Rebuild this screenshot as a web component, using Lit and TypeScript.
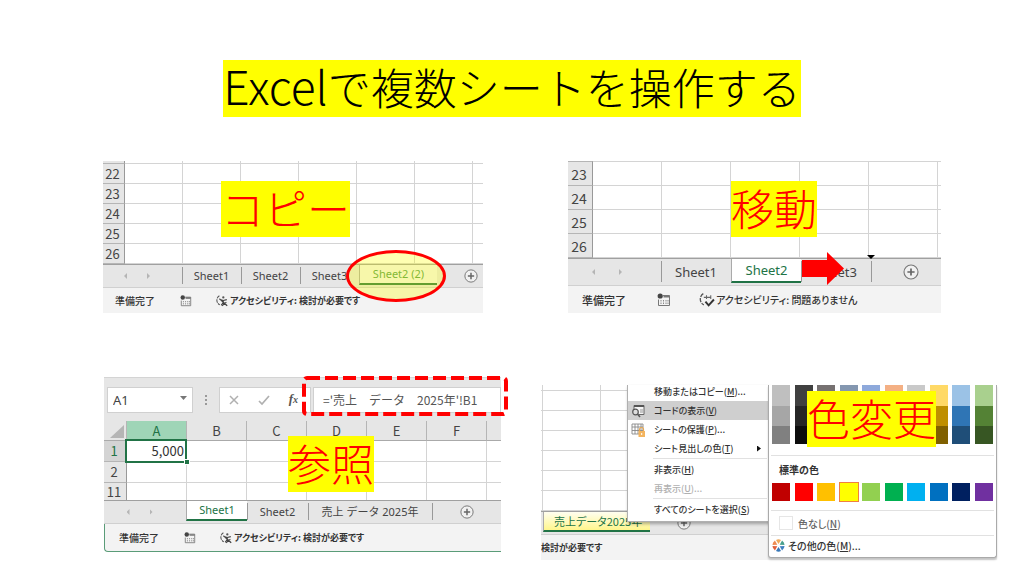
import { LitElement, html, css, svg, nothing } from "lit";
import { customElement } from "lit/decorators.js";
import { classMap } from "lit/directives/class-map.js";

type Tab = { name: string; active?: boolean };

const THEME_COLORS = [
  ["#bfbfbf", "#404040", "#767171", "#8497b0", "#8ea9db", "#f4b084", "#c9c9c9", "#ffd966", "#9bc2e6", "#a9d08e"],
  ["#a6a6a6", "#262626", "#3a3838", "#333f4f", "#305496", "#c65911", "#7b7b7b", "#bf8f00", "#2f75b5", "#548235"],
  ["#808080", "#0d0d0d", "#161616", "#222b35", "#203764", "#833c0c", "#525252", "#806000", "#1f4e78", "#375623"],
];
const STANDARD_COLORS = [
  "#c00000", "#ff0000", "#ffc000", "#ffff00", "#92d050",
  "#00b050", "#00b0f0", "#0070c0", "#002060", "#7030a0",
];

const plusIcon = svg`<svg class="plus" viewBox="0 0 16 16" aria-hidden="true">
  <circle cx="8" cy="8" r="7" fill="#f1f1f1" stroke="#777" stroke-width="1.1"/>
  <path d="M8 4.4v7.2M4.4 8h7.2" stroke="#666" stroke-width="1.7"/></svg>`;

const macroIcon = svg`<svg class="macro" viewBox="0 0 14 14" aria-hidden="true">
  <path d="M6 2.5h6.5v10h-11V6.500" fill="none" stroke="#777"/>
  <path d="M6.500 3.500h6" stroke="#777" stroke-width="2"/>
  <circle cx="3.200" cy="3" r="2.600" fill="#444"/>
  <path d="M4 7v4.500M6.500 7v4.500M9 7v4.500M11 7v4.500" stroke="#888" stroke-dasharray="1.500 1"/></svg>`;

const accessIcon = (ok: boolean) => svg`<svg class="access" viewBox="0 0 16 14" aria-hidden="true">
  <path d="M5 1.500A6 6 0 0 0 5.500 12" fill="none" stroke="#555" stroke-width="1.200" stroke-dasharray="4 1"/>
  ${ok
    ? svg`<path d="M5.500 5h6M8 3v3.500M12 3v3.500" fill="none" stroke="#666"/><path d="M7 9l3 3.500L15 7" fill="none" stroke="#333" stroke-width="1.800"/>`
    : svg`<circle cx="9.500" cy="3.500" r="1.300" fill="#555"/><path d="M6 6l3.500 1 4-1M9.500 7v2l4 4M9.500 9l-2.500 3.500M5 5l9 8M13 9l-5 4" fill="none" stroke="#444" stroke-width="1.200"/>`}
  </svg>`;

@customElement("app-root")
export class AppRoot extends LitElement {
  static styles = css`
    :host {
      display: block;
      min-height: 100vh;
      background: #fff;
      color: #444;
      font-family: "Noto Sans", "Noto Sans CJK JP", sans-serif;
      font-size: 11px;
    }
    * { box-sizing: border-box; }
    button, input {
      font: inherit;
      color: inherit;
      border: 0;
      padding: 0;
      margin: 0;
      background: none;
      border-radius: 0;
    }
    svg { display: block; flex: none; }
    header { padding-top: 60px; text-align: center; }
    h1, h2 {
      margin: 0;
      font: 300 43px/53px "Noto Sans CJK JP", sans-serif;
      white-space: nowrap;
    }
    h1 { display: inline-block; padding-bottom: 4px; color: #000; background: #ff0; vertical-align: top; }
    h1 span { font-size: 46px; line-height: 1; }
    h2 { position: absolute; color: #f00; background: #ff0; line-height: 52px; padding-bottom: 4px; }
    .row { display: grid; align-items: start; }
    .row.upper { grid-template-columns: 103fr 380fr 85fr 373fr 83fr; padding-top: 44px; }
    .row.lower { grid-template-columns: 104fr 397fr 40fr 456fr 27fr; padding-top: 64px; }
    .shot { position: relative; min-width: 0; --col: 58px; --line: 20px; --head: 22px; --bar: 24px; --foot: 25px; --tab: 59px; }
    .shot:nth-child(1) { grid-column: 2; }
    .shot:nth-child(2) { grid-column: 4; }
    .move { --col: 69px; --line: 24px; --head: 25px; --bar: 28px; --foot: 27px; --tab: 70px; font-size: 13px; }
    .refer { --col: 60px; --line: 21px; --head: 23px; --foot: 28px; --tab: 61px; }
    .color { margin-top: 8px; --head: 2px; }
    .copy h2 { left: 118px; top: 20px; }
    .move h2 { left: 163px; top: 20px; }
    .refer h2 { left: 184px; top: 59px; }
    .color h2 { left: 266px; top: 6px; z-index: 3; }

    table { width: 100%; table-layout: fixed; border-collapse: separate; border-spacing: 0; }
    th, td { height: var(--line); padding: 0; line-height: 18px; border: solid #d4d4d4; border-width: 0 1px 1px 0; font-weight: 400; overflow: hidden; white-space: nowrap; }
    td:last-child, thead th:last-child { border-right: 0; }
    th { background: #e6e6e6; font-size: 13px; font-family: "Noto Sans CJK JP", sans-serif; }
    tbody th { border-right: 1px solid #999; border-bottom-color: #b5b5b5; padding-right: 2px; }
    .color tbody th { background: #fff; border-color: #d4d4d4; }
    .hcol { width: var(--head); }
    .ccol { width: var(--col); }
    .lead th, .lead td { height: 3px; line-height: 0; }
    .move .lead th, .move .lead td { height: 1px; }
    .color .lead th, .color .lead td { height: 6px; }
    .move th { font-size: 14px; }

    .tabs { display: flex; align-items: stretch; height: var(--bar); background: #e6e6e6; border-top: 1px solid #a0a0a0; border-bottom: 1px solid #d0d0d0; overflow: hidden; }
    .nav { display: flex; justify-content: center; align-items: center; gap: 20px; width: calc(var(--head) + var(--col) - 1px); flex: none; padding-right: 11px; }
    .move .nav { gap: 24px; padding-right: 15px; }
    .nav button { width: 3px; height: 6px; background: #b5b5b5; clip-path: polygon(100% 0, 0 50%, 100% 100%); }
    .nav button + button { clip-path: polygon(0 0, 100% 50%, 0 100%); }
    .tab { width: var(--tab); flex: none; position: relative; line-height: 18px; padding-bottom: 1px; white-space: nowrap; }
    .tab::before { content: ""; position: absolute; left: 0; top: 2px; bottom: 3px; border-left: 1px solid #999; }
    .tab.active { background: #fff; color: #217346; height: calc(var(--bar) - 4px); border-bottom: 2px solid #217346; border-left: 1px solid #aaa; padding: 0; }
    .tab.active::before { display: none; }
    .tab.wide { width: 124px; }
    .tail { border-left: 1px solid #999; margin: 2px 0 3px; display: flex; align-items: center; padding-left: 27px; }
    .move .tail { padding-left: 31px; }
    .plus { width: 14px; height: 14px; }
    .move .plus { width: 16px; height: 16px; }
    .copy .tab.active { width: 78px; background: #f4f4f4; color: #4e9a4e; }
    .copy .tail { border: 0; }
    .color .tab.active { width: 107px; margin-left: 2px; background: linear-gradient(#fffef0, #fff68c); text-align: left; padding-left: 10px; font: 400 11px/18px "Noto Sans CJK JP", sans-serif; font-feature-settings: "palt"; }
    .color .tail { border: 0; }
    .color .nav { display: none; }

    .status { display: flex; align-items: center; height: var(--foot); padding-left: 12px; background: #f3f3f3; color: #333; font: 500 10px/16px "Noto Sans CJK JP", sans-serif; white-space: nowrap; overflow: hidden; }
    .status .proof { font-feature-settings: "palt"; font-size: 9px; }
    .macro { width: 12px; height: 12px; margin-left: 25px; }
    .access { width: 14px; height: 13px; margin: 0 1px 0 23px; }
    .move .status { font-size: 11px; padding-left: 14px; }
    .move .proof { font-size: 10px; }
    .move .macro { width: 14px; height: 14px; margin-left: 31px; }
    .move .access { width: 17px; height: 15px; margin-left: 27px; }
    .refer .status { padding-left: 14px; border-bottom: 1px solid #5a9c78; border-left: 1px solid #5a9c78; border-bottom-left-radius: 4px; }
    .color .status { padding-left: 0; }
    .bold { font-weight: 700; }

    .oval { position: absolute; left: 243px; top: 89px; width: 100px; height: 52px; border: 3px solid #f00; border-radius: 50%; background: rgba(255, 255, 0, 0.3); }
    .arrow { position: absolute; left: 234px; top: 91px; width: 42px; height: 33px; }
    .drop { position: absolute; left: 299px; top: 94px; width: 8px; height: 4px; background: #000; clip-path: polygon(0 0, 100% 0, 50% 100%); }
    .dashes { position: absolute; left: 197px; top: -2px; width: 209px; height: 42px; }

    .formula { display: flex; align-items: center; height: 44px; padding: 0 0 0 3px; background: #e6e6e6; border-top: 1px solid #d4d4d4; }
    .box { display: flex; align-items: center; height: 26px; background: #fff; border: 1px solid #d0d0d0; }
    .name { width: 86px; padding: 0 5px; justify-content: space-between; }
    .name input { width: 50px; font-size: 13px; }
    .caret { width: 7px; height: 4px; background: #777; clip-path: polygon(0 0, 100% 0, 50% 100%); margin-bottom: 3px; }
    .dots { width: 2px; height: 10px; margin: 0 12px; background: repeating-linear-gradient(#999 0 2px, transparent 2px 4px); }
    .tools { width: 92px; justify-content: space-between; padding: 0 12px 0 8px; margin-right: 2px; }
    .tools svg { width: 12px; height: 12px; }
    .fx { font: italic 700 13px/16px "Liberation Serif", serif; color: #555; }
    .fx small { font-size: 10px; }
    .entry { flex: 1; min-width: 0; padding-left: 9px; }
    .entry input { width: 100%; font: 400 12px/18px "Noto Sans CJK JP", sans-serif; color: #555; }
    thead th { height: 20px; border-bottom-color: #aaa; border-right-color: #b5b5b5; }
    .corner::after { content: ""; display: block; width: 14px; height: 13px; margin: 2px 0 0 6px; background: #b5b5b5; clip-path: polygon(100% 0, 100% 100%, 0 100%); }
    thead th.sel { background: #9fd5b7; color: #217346; }
    tbody th.sel { background: #d4d4d4; color: #217346; }
    td.sel { position: relative; overflow: visible; padding-right: 2px; text-align: right; font: 13px/18px "Noto Sans CJK JP", sans-serif; color: #333; }
    td.sel::before { content: ""; position: absolute; inset: -2px -1px -2px -2px; border: 2px solid #217346; }
    td.sel::after { content: ""; position: absolute; right: -3px; bottom: -3px; width: 4px; height: 4px; background: #217346; outline: 1px solid #fff; }
    .short th, .short td { height: 17px; line-height: 16px; border-bottom: 0; }

    .menu { position: absolute; left: 86px; top: 0; width: 143px; height: 137px; background: #fff; border: 1px solid #b0b0b0; border-top: 0; box-shadow: 1px 2px 3px rgba(0, 0, 0, 0.3); overflow: hidden; z-index: 1; }
    .menu, .palette { font: 500 9px/19px "Noto Sans CJK JP", sans-serif; color: #333; white-space: nowrap; }
    .palette { font-size: 10px; }
    .item { display: flex; align-items: center; width: 100%; height: 19px; padding: 0 8px 0 3px; text-align: left; font-feature-settings: "palt"; }
    .item:first-child { margin-top: -3px; }
    .item .ico { width: 14px; height: 14px; margin-right: 9px; flex: none; }
    .item .text { flex: 1; }
    .item.hot { background: #cfcfcf; }
    .item:disabled { color: #b0b0b0; }
    .item .more { width: 4px; height: 6px; background: #111; clip-path: polygon(0 0, 100% 50%, 0 100%); }
    hr { border: 0; border-top: 1px solid #e1e1e1; margin: 0 2px 1px 25px; }
    .palette { position: absolute; left: 227px; right: 0; top: 0; height: 173px; background: #fff; border: 1px solid #aaa; border-top: 0; border-radius: 0 0 3px 3px; box-shadow: 0 2px 2px rgba(0, 0, 0, 0.2); z-index: 2; }
    .swatches { display: flex; justify-content: space-between; padding: 0 3px; }
    .swatch { width: 18px; height: 18px; }
    .swatches.tall .swatch { height: 21px; }
    .swatches.mid .swatch { height: 20px; }
    .swatch.picked { outline: 1px solid #f08040; }
    .palette hr { margin: 0 2px; }
    .gap { padding-top: 11px; }
    .caption { padding: 4px 0 4px 10px; }
    .standard { padding-bottom: 9px; }
    .palette .item { height: 24px; padding-left: 10px; color: #666; }
    .palette .item.other { height: 19px; padding-left: 3px; color: #333; }
    .none { width: 14px; height: 14px; border: 1px solid #e6e6e6; margin-right: 5px; }
    .wheel { width: 13px; height: 13px; margin-right: 3px; }
  `;

  private sheet(rows: string[], columns: number) {
    const cells = Array.from({ length: columns + 1 });
    return html`<table aria-label="シート">
      <colgroup><col class="hcol" />${Array.from({ length: columns }, () => html`<col class="ccol" />`)}<col /></colgroup>
      <tbody>
        <tr class="lead"><th></th>${cells.map(() => html`<td></td>`)}</tr>
        ${rows.map((r) => html`<tr><th scope="row">${r}</th>${cells.map(() => html`<td></td>`)}</tr>`)}
      </tbody>
    </table>`;
  }

  private tabs(list: Tab[]) {
    return html`<div class="tabs">
      <div class="nav"><button aria-label="前のシート"></button><button aria-label="次のシート"></button></div>
      ${list.map((t) => html`<button class=${classMap({ tab: true, active: !!t.active, wide: t.name.length > 9 && !t.active })}>${t.name}</button>`)}
      <button class="tail" aria-label="新しいシート">${plusIcon}</button>
    </div>`;
  }

  private status(message: string, ok = false) {
    return html`<div class="status">
      <span>準備完了</span>${macroIcon}${accessIcon(ok)}
      <span class="proof ${ok ? "" : "bold"}">アクセシビリティ: ${message}</span>
    </div>`;
  }

  private copyShot() {
    return html`<section class="shot copy">
      ${this.sheet(["22", "23", "24", "25", "26"], 6)}
      ${this.tabs([{ name: "Sheet1" }, { name: "Sheet2" }, { name: "Sheet3" }, { name: "Sheet2 (2)", active: true }])}
      ${this.status("検討が必要です")}
      <div class="oval"></div>
      <h2>コピー</h2>
    </section>`;
  }

  private moveShot() {
    return html`<section class="shot move">
      ${this.sheet(["23", "24", "25", "26"], 5)}
      ${this.tabs([{ name: "Sheet1" }, { name: "Sheet2", active: true }, { name: "Sheet3" }])}
      ${this.status("問題ありません", true)}
      <div class="drop"></div>
      <svg class="arrow" viewBox="0 0 42 33" aria-hidden="true"><path d="M0 8h25V0l17 16.500L25 33v-8H0z" fill="#f00"/></svg>
      <h2>移動</h2>
    </section>`;
  }

  private referShot() {
    const letters = ["A", "B", "C", "D", "E", "F", ""];
    return html`<section class="shot refer">
      <div class="formula">
        <div class="box name"><input aria-label="名前ボックス" value="A1" /><button class="caret" aria-label="一覧"></button></div>
        <div class="dots"></div>
        <div class="box tools">
          <button aria-label="キャンセル"><svg viewBox="0 0 12 12"><path d="M2 2l8 8M10 2l-8 8" stroke="#b0b0b0" stroke-width="1.500"/></svg></button>
          <button aria-label="入力"><svg viewBox="0 0 12 12"><path d="M1 7l3 3 7-8" fill="none" stroke="#b0b0b0" stroke-width="1.700"/></svg></button>
          <button class="fx" aria-label="関数の挿入">f<small>x</small></button>
        </div>
        <div class="box entry"><input aria-label="数式" value="='売上　データ　2025年'!B1" /></div>
      </div>
      <table aria-label="シート">
        <colgroup><col class="hcol" />${letters.slice(0, 6).map(() => html`<col class="ccol" />`)}<col /></colgroup>
        <thead><tr><th class="corner"></th>${letters.map((l) => html`<th scope="col" class=${l === "A" ? "sel" : ""}>${l}</th>`)}</tr></thead>
        <tbody>
          ${["1", "2", "11"].map((r) => html`<tr class=${r === "11" ? "short" : ""}>
            <th scope="row" class=${r === "1" ? "sel" : ""}>${r}</th>
            ${letters.map((l) => (r === "1" && l === "A" ? html`<td class="sel">5,000</td>` : html`<td></td>`))}
          </tr>`)}
        </tbody>
      </table>
      ${this.tabs([{ name: "Sheet1", active: true }, { name: "Sheet2" }, { name: "売上  データ  2025年" }])}
      ${this.status("検討が必要です")}
      <svg class="dashes" viewBox="0 0 209 42" aria-hidden="true">
        <rect x="3" y="3" width="202" height="36" rx="3" fill="none" stroke="#f00" stroke-width="4" stroke-dasharray="13 5"/>
      </svg>
      <h2>参照</h2>
    </section>`;
  }

  private item(label: string, key: string, dots = "", opts: { icon?: unknown; cls?: string; disabled?: boolean; more?: boolean } = {}) {
    return html`<button class="item ${opts.cls ?? ""}" ?disabled=${!!opts.disabled}>
      <span class="ico">${opts.icon ?? nothing}</span>
      <span class="text">${label}(<u>${key}</u>)${dots}</span>
      ${opts.more ? html`<span class="more"></span>` : nothing}
    </button>`;
  }

  private swatches(colors: string[], cls: string) {
    return html`<div class="swatches ${cls}">
      ${colors.map((c) => html`<button class="swatch ${c === "#ffff00" ? "picked" : ""}" aria-label=${c} style="background:${c}"></button>`)}
    </div>`;
  }

  private colorShot() {
    const codeIcon = svg`<svg viewBox="0 0 14 14" width="14" height="14"><path d="M3 5V1.500h10v9H8" fill="#f4f4f4" stroke="#666"/><path d="M3 2h10" stroke="#555" stroke-width="2"/><path d="M9 6h3M9 8h3" stroke="#999"/><circle cx="4.500" cy="8" r="2.800" fill="#ddd" stroke="#555" stroke-width="1.200"/><path d="M6.500 10l2.500 3" stroke="#555" stroke-width="1.500"/></svg>`;
    const lockIcon = svg`<svg viewBox="0 0 14 14" width="14" height="14"><path d="M1 1h11v10H1zM1 4h11M1 7.500h11M4 1v10M7 1v10M10 1v10" fill="#fff" stroke="#888" stroke-width=".9"/><path d="M8.500 8V6.500a2 2 0 0 1 4 0V8" fill="none" stroke="#eaa850" stroke-width="1.200"/><path d="M7.500 8H14v6H7.500z" fill="#f3b45f"/><path d="M10.700 10v2" stroke="#fff"/></svg>`;
    const petals = ["#f0a95a", "#4aa08c", "#3f7fc0", "#3878b8", "#e0603c", "#ee8a50"];
    return html`<section class="shot color">
      ${this.sheet(["", "", "", "", "", ""], 7)}
      ${this.tabs([{ name: "売上データ2025年", active: true }])}
      <div class="status"><span class="proof bold">検討が必要です</span></div>
      <div class="menu">
        ${this.item("移動またはコピー", "M", "...")}
        ${this.item("コードの表示", "V", "", { icon: codeIcon, cls: "hot" })}
        ${this.item("シートの保護", "P", "...", { icon: lockIcon })}
        ${this.item("シート見出しの色", "T", "", { more: true })}
        <hr />
        ${this.item("非表示", "H")}
        ${this.item("再表示", "U", "...", { disabled: true })}
        <hr />
        ${this.item("すべてのシートを選択", "S")}
      </div>
      <div class="palette">
        ${this.swatches(THEME_COLORS[0], "tall")}${this.swatches(THEME_COLORS[1], "mid")}${this.swatches(THEME_COLORS[2], "")}
        <div class="gap"></div><hr />
        <div class="caption bold">標準の色</div>
        ${this.swatches(STANDARD_COLORS, "standard")}
        <hr />
        <button class="item"><span class="none"></span><span>色なし(<u>N</u>)</span></button>
        <hr />
        <button class="item other">
          <svg class="wheel" viewBox="-7 -7 14 14" aria-hidden="true">
            ${petals.map((c, i) => svg`<path transform="rotate(${i * 60})" d="M0 -1.500L-2.700 -6A6.500 6.500 0 0 1 2.700 -6z" fill=${c}/>`)}
          </svg>
          <span>その他の色(<u>M</u>)...</span>
        </button>
      </div>
      <h2>色変更</h2>
    </section>`;
  }

  render() {
    return html`<main>
      <header><h1><span>Excel</span>で複数シートを操作する</h1></header>
      <div class="row upper">${this.copyShot()}${this.moveShot()}</div>
      <div class="row lower">${this.referShot()}${this.colorShot()}</div>
    </main>`;
  }
}
